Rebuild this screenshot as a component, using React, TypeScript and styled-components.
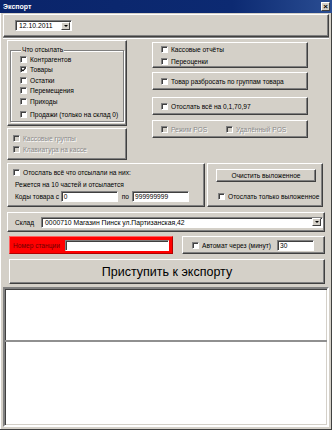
import styled, { createGlobalStyle } from "styled-components";

const GlobalStyle = createGlobalStyle`
  html, body { margin: 0; padding: 0; }
  body {
    background: #d4d0c8;
    font-family: "Liberation Sans", Arial, sans-serif;
    font-size: 6.6px;
    color: #000;
  }
  * { box-sizing: border-box; }
`;

const Window = styled.div`
  width: 332px;
  height: 430px;
  background: #d4d0c8;
  display: flex;
  flex-direction: column;
  box-shadow: inset -1px -1px 0 #404040, inset 1px 0 0 #fff;
`;

const TitleBar = styled.div`
  height: 13px;
  display: flex;
  align-items: center;
  justify-content: space-between;
  padding: 0 2px 0 3px;
  background: linear-gradient(90deg, #0a246a 0%, #0c2a72 70%, #2a4d92 100%);
`;

const Title = styled.span`
  color: #fff;
  font-weight: bold;
  font-size: 7px;
`;

const CloseBtn = styled.div`
  width: 9px;
  height: 9px;
  background: #d4d0c8;
  border: 1px solid;
  border-color: #fff #404040 #404040 #fff;
  display: flex;
  align-items: center;
  justify-content: center;
  font-size: 8px;
  font-weight: bold;
  line-height: 1;
`;

const Frame = styled.div`
  flex: 1;
  display: flex;
  flex-direction: column;
  padding: 0 3px 3px 3px;
`;

const Panel = styled.div<{ $w?: number; $h: number }>`
  width: ${(p) => (p.$w ? `${p.$w}px` : "auto")};
  height: ${(p) => p.$h}px;
  border: 1px solid;
  border-color: #fff #404040 #404040 #fff;
  box-shadow: inset -1px -1px 0 #808080;
  background: #d4d0c8;
`;

const DateBar = styled(Panel)`
  margin-top: 1px;
  display: flex;
  align-items: center;
  padding-left: 11px;
`;

const Combo = styled.div<{ $w: number }>`
  width: ${(p) => p.$w}px;
  height: 11px;
  background: #fff;
  border: 1px solid;
  border-color: #808080 #fff #fff #808080;
  box-shadow: inset 1px 1px 0 #404040;
  display: flex;
  align-items: center;
  justify-content: space-between;
  padding: 0 1px 0 3px;
  font-size: 6.8px;
  white-space: nowrap;
`;

const ComboArrow = styled.div`
  width: 9px;
  height: 8px;
  background: #d4d0c8;
  border: 1px solid;
  border-color: #fff #404040 #404040 #fff;
  display: flex;
  align-items: center;
  justify-content: center;
  &::after {
    content: "";
    border-left: 2px solid transparent;
    border-right: 2px solid transparent;
    border-top: 2px solid #000;
  }
`;

const Separator = styled.div`
  height: 2px;
  border-top: 1px solid #808080;
  border-bottom: 1px solid #fff;
`;

const Middle = styled.div`
  margin-top: 1px;
  padding-left: 4px;
  display: flex;
  align-items: flex-start;
`;

const Column = styled.div<{ $w: number; $ml?: number; $pt?: number }>`
  width: ${(p) => p.$w}px;
  margin-left: ${(p) => p.$ml ?? 0}px;
  padding-top: ${(p) => p.$pt ?? 0}px;
  display: flex;
  flex-direction: column;
`;

const GroupBox = styled.fieldset`
  margin: 5px 2px 0 2px;
  padding: 0 0 0 9px;
  height: 76px;
  border: 1px solid #808080;
  box-shadow: 1px 1px 0 #fff, inset 1px 1px 0 #fff;
  display: flex;
  flex-direction: column;
`;

const Legend = styled.legend`
  padding: 0 1px;
  margin-left: 1px;
  font-size: 6.6px;
  line-height: 8px;
  background: #d4d0c8;
`;

const CheckRow = styled.div<{ $h?: number; $mt?: number }>`
  height: ${(p) => p.$h ?? 10.5}px;
  margin-top: ${(p) => p.$mt ?? 0}px;
  display: flex;
  align-items: center;
  gap: 3px;
  white-space: nowrap;
`;

const Box = styled.span<{ $disabled?: boolean }>`
  width: 7px;
  height: 7px;
  flex: none;
  background: ${(p) => (p.$disabled ? "#d4d0c8" : "#fff")};
  border: 1px solid;
  border-color: #808080 #fff #fff #808080;
  box-shadow: inset 1px 1px 0 #404040;
  display: flex;
  align-items: center;
  justify-content: center;
`;

const Label = styled.span<{ $disabled?: boolean }>`
  font-size: 6.6px;
  color: ${(p) => (p.$disabled ? "#8a8a8a" : "#000")};
  text-shadow: ${(p) => (p.$disabled ? "1px 1px 0 #fff" : "none")};
`;

const PadPanel = styled(Panel)<{ $pl: number; $pt?: number; $mt?: number }>`
  padding-left: ${(p) => p.$pl}px;
  padding-top: ${(p) => p.$pt ?? 0}px;
  margin-top: ${(p) => p.$mt ?? 0}px;
  display: flex;
  flex-direction: column;
`;

const InlineRow = styled.div`
  display: flex;
  align-items: center;
  height: 100%;
  gap: 19px;
`;

const Lower = styled.div`
  margin-top: 3px;
  padding-left: 4px;
  display: flex;
  gap: 2px;
`;

const TextLine = styled.div<{ $h: number }>`
  height: ${(p) => p.$h}px;
  display: flex;
  align-items: center;
  white-space: nowrap;
  font-size: 6.6px;
  padding-left: 2px;
`;

const Field = styled.div<{ $w: number }>`
  width: ${(p) => p.$w}px;
  height: 11px;
  background: #fff;
  border: 1px solid;
  border-color: #808080 #fff #fff #808080;
  box-shadow: inset 1px 1px 0 #404040;
  font-size: 6.6px;
  padding-left: 2px;
  display: flex;
  align-items: center;
  flex: none;
`;

const ButtonSmall = styled.div`
  width: 100px;
  height: 13px;
  margin: 5px 0 0 8px;
  border: 1px solid;
  border-color: #fff #404040 #404040 #fff;
  box-shadow: inset -1px -1px 0 #808080;
  display: flex;
  align-items: center;
  justify-content: center;
  font-size: 6.6px;
`;

const StockBar = styled(Panel)`
  margin: 5px 0 0 4px;
  display: flex;
  align-items: center;
  padding-left: 7px;
  gap: 7px;
`;

const StationRow = styled.div`
  margin-top: 4px;
  padding-left: 6px;
  display: flex;
  gap: 9px;
`;

const RedPanel = styled.div`
  width: 164px;
  height: 18px;
  background: #ff0000;
  border: 1px solid;
  border-color: #ff6060 #b00000 #b00000 #ff6060;
  display: flex;
  align-items: center;
  padding-left: 3px;
  gap: 5px;
`;

const RedLabel = styled.span`
  color: #700000;
  font-size: 6.6px;
  white-space: nowrap;
`;

const AutoPanel = styled(Panel)`
  display: flex;
  align-items: center;
  padding-left: 9px;
  gap: 3px;
`;

const BigButton = styled.div`
  margin: 5px 0 0 6px;
  width: 316px;
  height: 25px;
  border: 1px solid;
  border-color: #fff #404040 #404040 #fff;
  box-shadow: inset -1px -1px 0 #808080;
  display: flex;
  align-items: center;
  justify-content: center;
  font-size: 12.5px;
`;

const List = styled.div`
  margin-top: 3px;
  height: 140px;
  background: #fff;
  border: 2px solid;
  border-color: #808080 #fff #fff #808080;
  box-shadow: inset 1px 1px 0 #404040, inset -1px -1px 0 #d4d0c8;
  display: flex;
  flex-direction: column;
`;

const Pane = styled.div<{ $h?: number }>`
  height: ${(p) => (p.$h ? `${p.$h}px` : "auto")};
  flex: ${(p) => (p.$h ? "none" : "1")};
  border-bottom: ${(p) => (p.$h ? "2px solid #909090" : "none")};
`;

const Check = ({ checked, disabled }: { checked?: boolean; disabled?: boolean }) => (
  <Box $disabled={disabled}>
    {checked && (
      <svg width="5" height="5" viewBox="0 0 5 5">
        <path d="M0.5 2.3 L2 3.8 L4.6 0.8" stroke="#000" strokeWidth="1.1" fill="none" />
      </svg>
    )}
  </Box>
);

const Item = ({
  text,
  checked,
  disabled,
  h,
  mt,
}: {
  text: string;
  checked?: boolean;
  disabled?: boolean;
  h?: number;
  mt?: number;
}) => (
  <CheckRow $h={h} $mt={mt}>
    <Check checked={checked} disabled={disabled} />
    <Label $disabled={disabled}>{text}</Label>
  </CheckRow>
);

export default function App() {
  return (
    <>
      <GlobalStyle />
      <Window>
        <TitleBar>
          <Title>Экспорт</Title>
          <CloseBtn>×</CloseBtn>
        </TitleBar>
        <Frame>
          <DateBar $h={23}>
            <Combo $w={57}>
              12.10.2011
              <ComboArrow />
            </Combo>
          </DateBar>
          <Separator />

          <Middle>
            <Column $w={120}>
              <Panel $h={86}>
                <GroupBox>
                  <Legend>Что отсылать</Legend>
                  <Item text="Контрагентов" />
                  <Item text="Товары" checked />
                  <Item text="Остатки" />
                  <Item text="Перемещения" />
                  <Item text="Приходы" />
                  <Item text="Продажи (только на склад 0)" mt={2.5} />
                </GroupBox>
              </Panel>
              <PadPanel $h={32} $pl={5} $pt={4} $mt={2}>
                <Item text="Кассовые группы" disabled h={11} />
                <Item text="Клавиатура на кассе" disabled h={11} />
              </PadPanel>
            </Column>

            <Column $w={156} $ml={25} $pt={2}>
              <PadPanel $h={26} $pl={8} $pt={1}>
                <Item text="Кассовые отчёты" h={12} />
                <Item text="Переоценки" h={12} />
              </PadPanel>
              <PadPanel $h={18} $pl={8} $mt={4}>
                <Item text="Товар разбросать по группам товара" h={16} />
              </PadPanel>
              <PadPanel $h={18} $pl={8} $mt={7}>
                <Item text="Отослать всё на 0,1,70,97" h={16} />
              </PadPanel>
              <PadPanel $h={18} $pl={8} $mt={5}>
                <InlineRow>
                  <Item text="Режим POS" disabled />
                  <Item text="Удалённый POS" disabled />
                </InlineRow>
              </PadPanel>
            </Column>
          </Middle>

          <Lower>
            <PadPanel $w={198} $h={44} $pl={5} $pt={2}>
              <Item text="Отослать всё что отсылали на них:" h={12} />
              <TextLine $h={12}>Режется на 10 частей и отсылается</TextLine>
              <TextLine $h={12}>
                Коды товара с&nbsp;
                <Field $w={57}>0</Field>
                <span style={{ margin: "0 3px 0 4px" }}>по</span>
                <Field $w={57}>999999999</Field>
              </TextLine>
            </PadPanel>
            <PadPanel $w={116} $h={44} $pl={0}>
              <ButtonSmall>Очистить выложенное</ButtonSmall>
              <CheckRow $h={16} $mt={6} style={{ paddingLeft: 10 }}>
                <Check />
                <Label>Отослать только выложенное</Label>
              </CheckRow>
            </PadPanel>
          </Lower>

          <StockBar $w={318} $h={20}>
            <Label>Склад</Label>
            <Combo $w={282}>
              0000710 Магазин Пинск ул.Партизанская,42
              <ComboArrow />
            </Combo>
          </StockBar>

          <StationRow>
            <RedPanel>
              <RedLabel>Номер станции</RedLabel>
              <Field $w={104} />
            </RedPanel>
            <AutoPanel $w={143} $h={18}>
              <Check />
              <Label>Автомат через (минут)</Label>
              <Field $w={37} style={{ marginLeft: 3 }}>
                30
              </Field>
            </AutoPanel>
          </StationRow>

          <BigButton>Приступить к экспорту</BigButton>

          <List>
            <Pane $h={53} />
            <Pane />
          </List>
        </Frame>
      </Window>
    </>
  );
}
